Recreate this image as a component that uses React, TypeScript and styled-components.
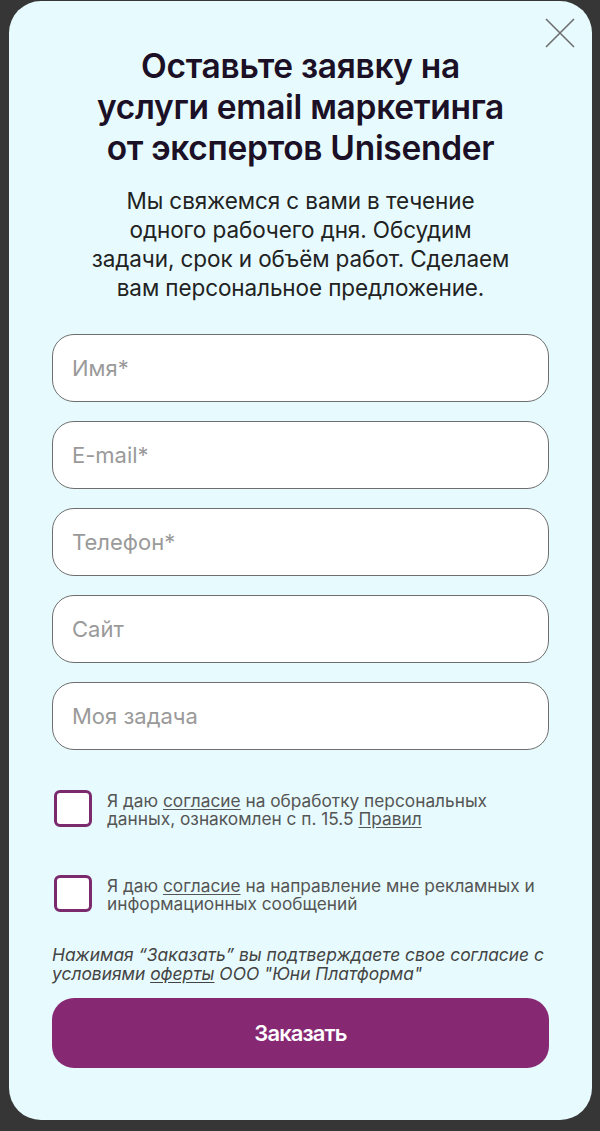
import React from "react";
import styled, { createGlobalStyle } from "styled-components";

const Global = createGlobalStyle`
  html, body { margin: 0; padding: 0; background: #363636; }
  body { font-family: Inter, "Noto Sans", sans-serif; }
  * { box-sizing: border-box; }
`;

const Page = styled.div`
  width: 600px;
  height: 1131px;
  padding: 1px 8px 11px 9px;
  display: flex;
`;

const Modal = styled.div`
  position: relative;
  flex: 1;
  background: #e7fbfe;
  border-radius: 32px;
  padding: 45px 43px 0 43px;
  display: flex;
  flex-direction: column;
  align-items: stretch;
`;

const Close = styled.button`
  position: absolute;
  top: 14px;
  right: 14px;
  width: 36px;
  height: 36px;
  padding: 0;
  border: none;
  background: transparent;
  display: flex;
  align-items: center;
  justify-content: center;
`;

const Title = styled.h1`
  margin: 0;
  font-family: Inter, sans-serif;
  font-weight: 600;
  font-size: 33.5px;
  line-height: 41px;
  letter-spacing: -0.3px;
  text-align: center;
  color: #1b1025;
`;

const Lead = styled.p`
  margin: 17px 0 0;
  font-family: Inter, sans-serif;
  font-weight: 400;
  font-size: 22.5px;
  line-height: 29px;
  letter-spacing: -0.1px;
  text-align: center;
  color: #222;
`;

const Fields = styled.div`
  margin-top: 32px;
  display: flex;
  flex-direction: column;
  gap: 19px;
`;

const Field = styled.input`
  height: 68px;
  width: 100%;
  border: 1px solid #6e6e6e;
  border-radius: 22px;
  background: #fff;
  padding: 0 19px;
  font-family: Inter, sans-serif;
  font-size: 22px;
  color: #222;
  outline: none;
  &::placeholder { color: #9a9a9a; }
`;

const Consents = styled.div`
  margin-top: 40px;
  display: flex;
  flex-direction: column;
  gap: 47px;
  padding-left: 2px;
`;

const ConsentRow = styled.label`
  display: flex;
  align-items: flex-start;
  gap: 15px;
`;

const Box = styled.span`
  flex: none;
  width: 38px;
  height: 37px;
  border: 3px solid #7b2b6d;
  border-radius: 6px;
  background: #fff;
`;

const ConsentText = styled.span`
  padding-top: 2px;
  font-family: Inter, sans-serif;
  font-size: 17.3px;
  line-height: 18px;
  color: #555;
`;

const Link = styled.a`
  color: inherit;
  text-decoration: underline;
  text-underline-offset: 2px;
`;

const Note = styled.p`
  margin: 32px 0 0;
  font-family: Inter, sans-serif;
  font-style: italic;
  font-size: 17.4px;
  line-height: 19px;
  color: #444;
`;

const Submit = styled.button`
  margin-top: 15px;
  height: 70px;
  width: 100%;
  border: none;
  border-radius: 22px;
  background: #862872;
  color: #fff;
  font-family: Inter, sans-serif;
  font-weight: 600;
  font-size: 22px;
  letter-spacing: -0.9px;
`;

export default function App() {
  return (
    <>
      <Global />
      <Page>
        <Modal>
          <Close aria-label="Закрыть">
            <svg width="32" height="32" viewBox="0 0 32 32">
              <path d="M2 2 L30 30 M30 2 L2 30" stroke="#6e6e6e" strokeWidth="1.6" fill="none" />
            </svg>
          </Close>
          <Title>
            Оставьте заявку на
            <br />
            услуги email маркетинга
            <br />
            от экспертов Unisender
          </Title>
          <Lead>
            Мы свяжемся с вами в течение
            <br />
            одного рабочего дня. Обсудим
            <br />
            задачи, срок и объём работ. Сделаем
            <br />
            вам персональное предложение.
          </Lead>
          <Fields>
            <Field placeholder="Имя*" />
            <Field placeholder="E-mail*" />
            <Field placeholder="Телефон*" />
            <Field placeholder="Сайт" />
            <Field placeholder="Моя задача" />
          </Fields>
          <Consents>
            <ConsentRow>
              <Box />
              <ConsentText>
                Я даю <Link>согласие</Link> на обработку персональных
                <br />
                данных, ознакомлен с п. 15.5 <Link>Правил</Link>
              </ConsentText>
            </ConsentRow>
            <ConsentRow>
              <Box />
              <ConsentText>
                Я даю <Link>согласие</Link> на направление мне рекламных и
                <br />
                информационных сообщений
              </ConsentText>
            </ConsentRow>
          </Consents>
          <Note>
            Нажимая “Заказать” вы подтверждаете свое согласие с
            <br />
            условиями <Link>оферты</Link> ООО "Юни Платформа"
          </Note>
          <Submit>Заказать</Submit>
        </Modal>
      </Page>
    </>
  );
}
